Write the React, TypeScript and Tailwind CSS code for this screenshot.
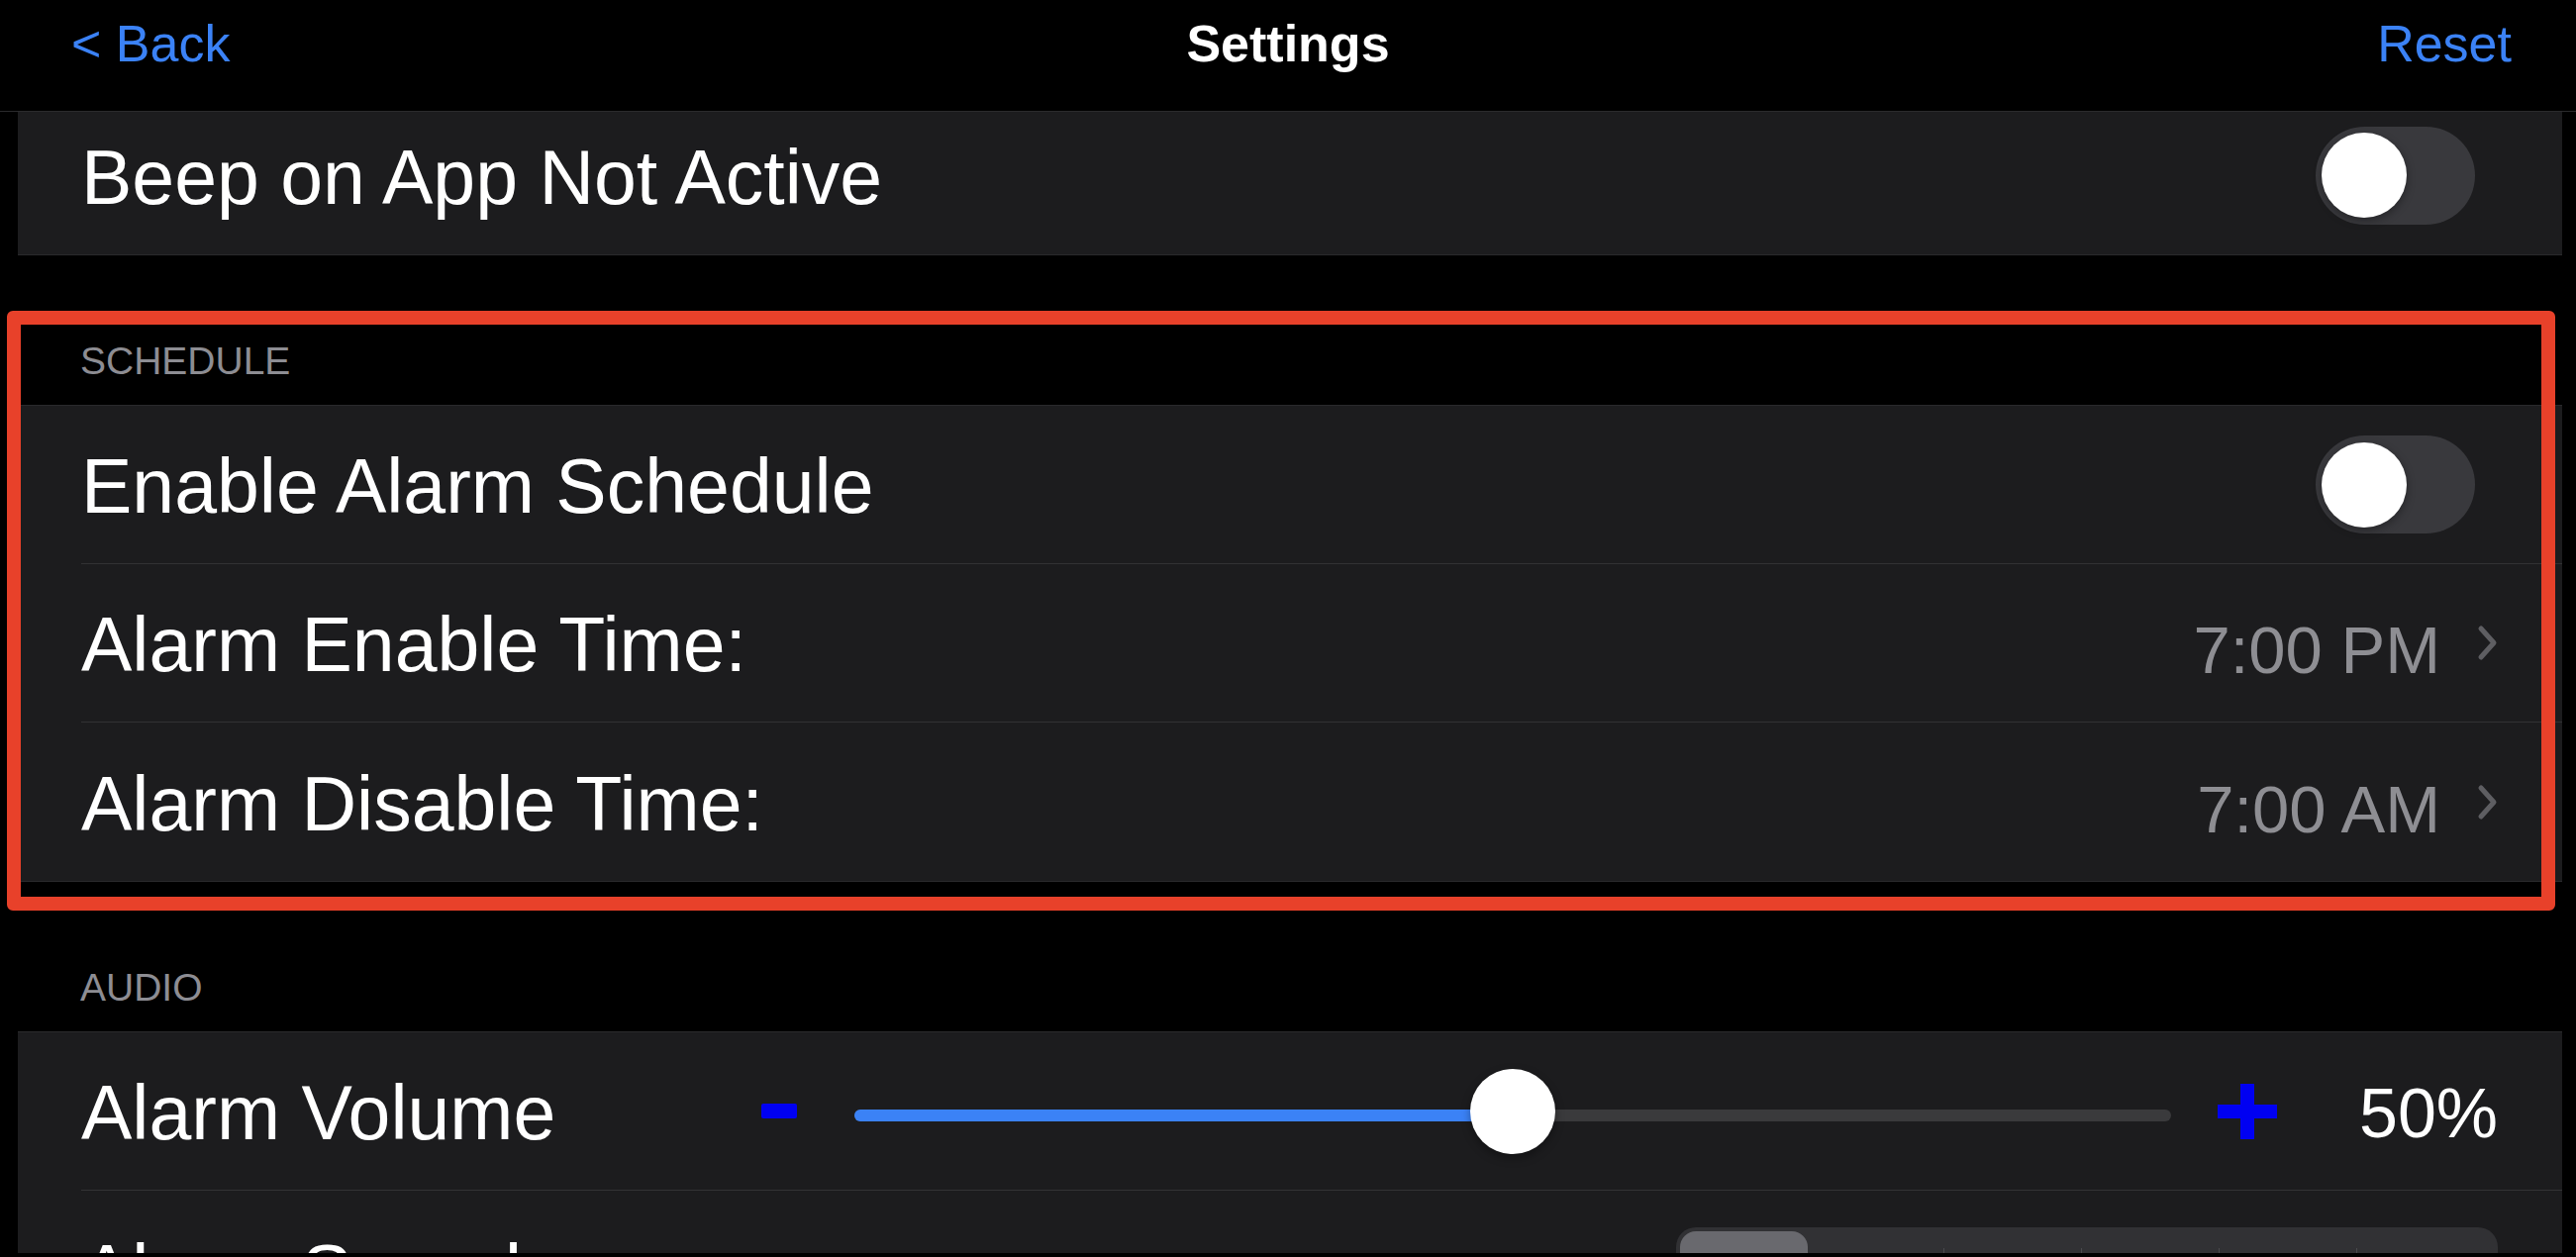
import React from "react";

function Toggle() {
  return (
    <div className="w-[161px] h-[99px] rounded-full bg-[#39393d] mr-[23px] px-[6px] flex items-center shrink-0">
      <div className="w-[86px] h-[86px] rounded-full bg-white shadow-[0_3px_8px_rgba(0,0,0,0.35)]" />
    </div>
  );
}

function Chevron() {
  return (
    <svg width="21" height="37" viewBox="0 0 21 37" className="shrink-0">
      <path d="M4 4 L17 18.5 L4 33" fill="none" stroke="#5e5e62" strokeWidth="5" strokeLinecap="round" strokeLinejoin="round" />
    </svg>
  );
}

function Row({ children, last }: { children: React.ReactNode; last?: boolean }) {
  return (
    <div className="h-[160px] pl-[64px]">
      <div className={"h-full flex items-center pr-[65px] " + (last ? "" : "border-b border-[#323234]")}>{children}</div>
    </div>
  );
}

function Label({ children }: { children: React.ReactNode }) {
  return <span className="block pt-[4px] text-[77px] text-white leading-none whitespace-nowrap">{children}</span>;
}

function SectionHeader({ children }: { children: React.ReactNode }) {
  return (
    <div className="pt-[83px] pb-[20px] pl-[81px] text-[39px] leading-[48px] text-[#8d8d93] uppercase">{children}</div>
  );
}

function Group({ children, className = "" }: { children: React.ReactNode; className?: string }) {
  return <div className={"ml-[18px] mr-[14px] bg-[#1c1c1e] border-y border-[#2a2a2c] " + className}>{children}</div>;
}

export default function App() {
  return (
    <div className="w-[2602px] h-[1270px] bg-black overflow-hidden relative font-['Liberation_Sans',Arial,sans-serif]">
      <div className="h-[1266px] overflow-hidden flex flex-col">
        <nav className="h-[113px] shrink-0 border-b border-[#2a2a2c] bg-black relative z-10">
          <div className="h-[88px] grid grid-cols-3 items-center text-[52px] leading-none">
            <span className="pl-[72px] text-[#3b82f6]">&lt; Back</span>
            <span className="text-center font-bold text-white">Settings</span>
            <span className="text-right pr-[65px] text-[#3b82f6]">Reset</span>
          </div>
        </nav>
        <div className="flex-1 overflow-hidden">
          <Group className="-mt-[17px]">
            <Row last>
              <div className="flex-1">
                <Label>Beep on App Not Active</Label>
              </div>
              <Toggle />
            </Row>
          </Group>

          <SectionHeader>Schedule</SectionHeader>
          <Group>
            <Row>
              <div className="flex-1">
                <Label>Enable Alarm Schedule</Label>
              </div>
              <Toggle />
            </Row>
            <Row>
              <div className="flex-1">
                <Label>Alarm Enable Time:</Label>
              </div>
              <span className="text-[67px] leading-none text-[#8e8e93] mt-[14px] mr-[37px] whitespace-nowrap">7:00 PM</span>
              <Chevron />
            </Row>
            <Row last>
              <div className="flex-1">
                <Label>Alarm Disable Time:</Label>
              </div>
              <span className="text-[67px] leading-none text-[#8e8e93] mt-[14px] mr-[37px] whitespace-nowrap">7:00 AM</span>
              <Chevron />
            </Row>
          </Group>

          <SectionHeader>Audio</SectionHeader>
          <Group>
            <Row>
              <div className="w-[687px] shrink-0">
                <Label>Alarm Volume</Label>
              </div>
              <svg width="36" height="15" viewBox="0 0 36 15" className="shrink-0">
                <rect x="0" y="0" width="36" height="15" rx="2" fill="#0000f2" />
              </svg>
              <div className="flex-1 ml-[58px] relative h-[86px] flex items-center">
                <div className="w-full h-[12px] mt-[8px] rounded-full bg-[#3a3a3c] overflow-hidden">
                  <div className="h-full bg-[#3b82f6]" style={{ width: "50%" }} />
                </div>
                <div
                  className="absolute top-0 w-[86px] h-[86px] rounded-full bg-white shadow-[0_4px_10px_rgba(0,0,0,0.35)]"
                  style={{ left: "calc(50% - 43px)" }}
                />
              </div>
              <svg width="60" height="56" viewBox="0 0 60 56" className="shrink-0 ml-[47px]">
                <rect x="23" y="0" width="14" height="56" fill="#0000f2" />
                <rect x="0" y="21" width="60" height="14" fill="#0000f2" />
              </svg>
              <span className="ml-[83px] w-[140px] pt-[4px] text-right text-[70px] leading-none text-white">50%</span>
            </Row>
            <Row last>
              <div className="flex-1">
                <Label>Alarm Sound</Label>
              </div>
              <div className="w-[830px] h-[87px] rounded-[20px] bg-[#313134] p-[4px] flex items-center shrink-0">
                <div className="w-[129px] h-full rounded-[16px] bg-[#69696e]" />
                <div className="w-[137px] h-full" />
                <div className="w-[1px] h-[44px] bg-[#4a4a4d]" />
                <div className="w-[138px] h-full" />
                <div className="w-[1px] h-[44px] bg-[#4a4a4d]" />
                <div className="w-[138px] h-full" />
                <div className="w-[1px] h-[44px] bg-[#4a4a4d]" />
                <div className="w-[138px] h-full" />
                <div className="w-[1px] h-[44px] bg-[#4a4a4d]" />
                <div className="flex-1 h-full" />
              </div>
            </Row>
          </Group>
        </div>
      </div>

      <div className="absolute left-[7px] top-[314px] w-[2574px] h-[606px] border-[14px] border-[#e8412a] rounded-[6px] pointer-events-none" />
    </div>
  );
}
